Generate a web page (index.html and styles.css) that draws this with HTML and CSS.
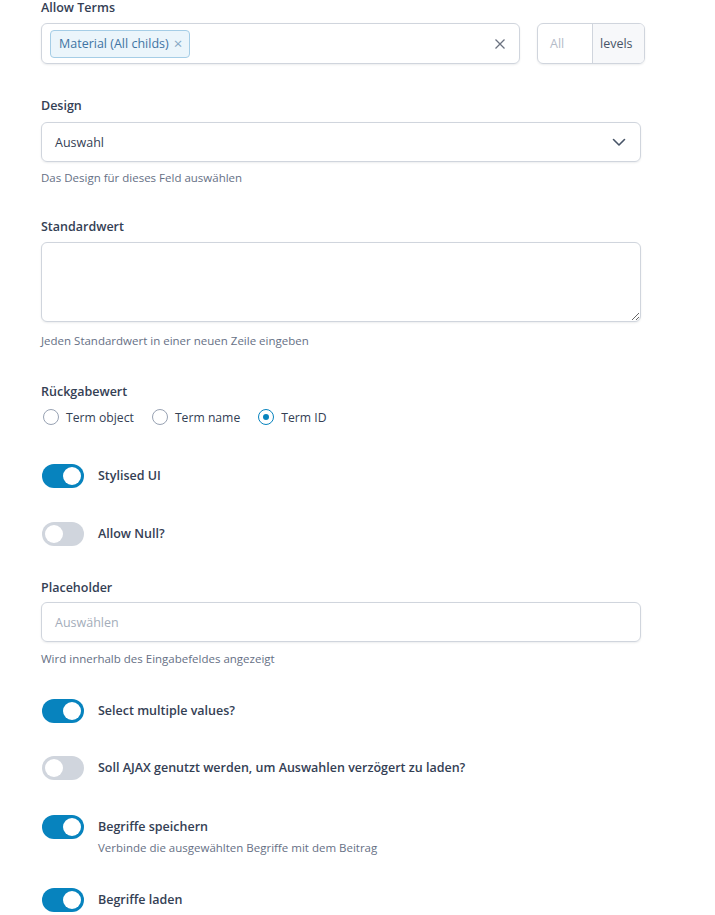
FILE: index.html
```html
<!DOCTYPE html>
<html lang="de">
<head>
<meta charset="utf-8">
<title>Field settings</title>
<link rel="stylesheet" href="styles.css">
</head>
<body>
<div class="settings">
  <div class="field">
    <div class="label">Allow Terms</div>
    <div class="terms-row">
      <div class="multi">
        <span class="tag">Material (All childs)<span class="tag-x">×</span></span>
        <svg class="clear" width="12" height="12" viewBox="0 0 12 12"><path d="M1.5 1.5l9 9M10.5 1.5l-9 9" stroke="#6b7280" stroke-width="1.3" fill="none"/></svg>
      </div>
      <div class="levels">
        <span class="levels-input">All</span>
        <span class="levels-addon">levels</span>
      </div>
    </div>
  </div>

  <div class="field">
    <div class="label label-wide">Design</div>
    <div class="input select">
      <span>Auswahl</span>
      <svg width="14" height="9" viewBox="0 0 14 9"><path d="M1.5 1.5l5.5 5.5 5.5-5.5" stroke="#475467" stroke-width="1.6" fill="none" stroke-linecap="round" stroke-linejoin="round"/></svg>
    </div>
    <div class="desc desc-sel">Das Design für dieses Feld auswählen</div>
  </div>

  <div class="field">
    <div class="label">Standardwert</div>
    <textarea class="textarea"></textarea>
    <div class="desc desc-ta">Jeden Standardwert in einer neuen Zeile eingeben</div>
  </div>

  <div class="field field-radio">
    <div class="label">Rückgabewert</div>
    <div class="radios">
      <span class="radio"><span class="circle"></span>Term object</span>
      <span class="radio"><span class="circle"></span>Term name</span>
      <span class="radio"><span class="circle on"></span>Term ID</span>
    </div>
  </div>

  <div class="toggle-row first"><span class="toggle on"></span><div><div class="label">Stylised UI</div></div></div>
  <div class="toggle-row"><span class="toggle"></span><div><div class="label">Allow Null?</div></div></div>

  <div class="field">
    <div class="label label-tight">Placeholder</div>
    <div class="input"><span class="ph">Auswählen</span></div>
    <div class="desc desc-ph">Wird innerhalb des Eingabefeldes angezeigt</div>
  </div>

  <div class="toggle-row after-desc"><span class="toggle on"></span><div><div class="label">Select multiple values?</div></div></div>
  <div class="toggle-row tight"><span class="toggle"></span><div><div class="label">Soll AJAX genutzt werden, um Auswahlen verzögert zu laden?</div></div></div>
  <div class="toggle-row loose"><span class="toggle on"></span><div><div class="label">Begriffe speichern</div><div class="desc desc-tg">Verbinde die ausgewählten Begriffe mit dem Beitrag</div></div></div>
  <div class="toggle-row after-desc"><span class="toggle on"></span><div><div class="label">Begriffe laden</div></div></div>
</div>
</body>
</html>
```

FILE: styles.css
```css
* { box-sizing: border-box; }
body {
  margin: 0;
  background: #fff;
  font-family: "Open Sans", "Noto Sans", sans-serif;
  color: #344054;
}
.settings {
  width: 715px;
  padding: 1px 0 0 41px;
  display: flex;
  flex-direction: column;
  gap: 35px;
}
.field { width: 600px; }
.field-radio { margin-top: 2px; }
.label {
  font-size: 12.5px;
  font-weight: 600;
  line-height: 14px;
  color: #344054;
}
.field > .label { margin-bottom: 8px; }
.field > .label.label-wide { margin-bottom: 9px; }
.field > .label.label-tight { margin-bottom: 7px; }
.desc {
  font-size: 11.5px;
  line-height: 14px;
  color: #667085;
  margin-top: 10px;
}
.desc-sel { margin-top: 9px; }
.desc-ta { margin-top: 12px; }
.desc-ph { margin-top: 10px; }
.terms-row {
  display: flex;
  align-items: center;
  gap: 17px;
  width: 604px;
}
.multi {
  width: 479px;
  height: 41px;
  border: 1px solid #d0d5dd;
  border-radius: 6px;
  box-shadow: 0 1px 2px rgba(16, 24, 40, 0.08);
  display: flex;
  align-items: center;
  justify-content: space-between;
  padding: 0 13px 0 8px;
}
.tag {
  display: inline-flex;
  align-items: center;
  height: 28px;
  padding: 0 7px 0 8px;
  background: #ebf5fb;
  border: 1px solid #a5cde6;
  border-radius: 4px;
  font-size: 12.5px;
  color: #3f74a3;
}
.tag-x {
  margin-left: 5px;
  color: #86a8c4;
  font-size: 15px;
  line-height: 1;
}
.levels {
  width: 108px;
  height: 41px;
  border: 1px solid #d0d5dd;
  border-radius: 6px;
  box-shadow: 0 1px 2px rgba(16, 24, 40, 0.08);
  display: flex;
  overflow: hidden;
  font-size: 12.5px;
}
.levels-input {
  width: 55px;
  display: flex;
  align-items: center;
  padding-left: 12px;
  color: #b4bcc8;
  border-right: 1px solid #d0d5dd;
}
.levels-addon {
  flex: 1;
  display: flex;
  align-items: center;
  padding-left: 7px;
  background: #f7f8fa;
  color: #475467;
}
.input {
  width: 600px;
  height: 40px;
  border: 1px solid #d0d5dd;
  border-radius: 6px;
  box-shadow: 0 1px 2px rgba(16, 24, 40, 0.08);
  display: flex;
  align-items: center;
  padding: 0 13px;
  font-size: 12.5px;
  color: #344054;
}
.select { justify-content: space-between; padding-right: 14px; }
.ph { color: #a4adba; }
.textarea {
  display: block;
  width: 600px;
  height: 80px;
  margin: 0;
  border: 1px solid #d0d5dd;
  border-radius: 6px;
  box-shadow: 0 1px 2px rgba(16, 24, 40, 0.08);
  font-family: inherit;
  resize: vertical;
}
.radios {
  display: flex;
  gap: 16px;
  height: 20px;
  align-items: center;
  margin-top: 7px;
}
.radio {
  display: inline-flex;
  align-items: center;
  gap: 7px;
  font-size: 12.2px;
  color: #344054;
  padding-left: 2px;
}
.circle {
  width: 16px;
  height: 16px;
  border: 1px solid #98a2b3;
  border-radius: 50%;
  display: inline-flex;
  align-items: center;
  justify-content: center;
}
.circle.on { border-color: #0783be; }
.circle.on::after {
  content: "";
  width: 6px;
  height: 6px;
  border-radius: 50%;
  background: #0783be;
}
.toggle-row {
  display: flex;
  align-items: flex-start;
  gap: 14px;
  margin-top: -1px;
}
.toggle-row.first { margin-top: 2px; }
.toggle-row.after-desc { margin-top: -2px; }
.toggle-row.tight { margin-top: -2px; }
.toggle-row.loose { margin-top: 0; }
.toggle-row .label { line-height: 24px; }
.toggle-row .desc-tg { margin-top: 2px; }
.toggle {
  position: relative;
  width: 42px;
  height: 24px;
  border-radius: 12px;
  background: #d0d5dd;
  flex: none;
  margin-left: 1px;
}
.toggle::after {
  content: "";
  position: absolute;
  top: 3px;
  left: 3px;
  width: 18px;
  height: 18px;
  border-radius: 50%;
  background: #fff;
}
.toggle.on { background: #0783be; }
.toggle.on::after { left: 21px; }
```
